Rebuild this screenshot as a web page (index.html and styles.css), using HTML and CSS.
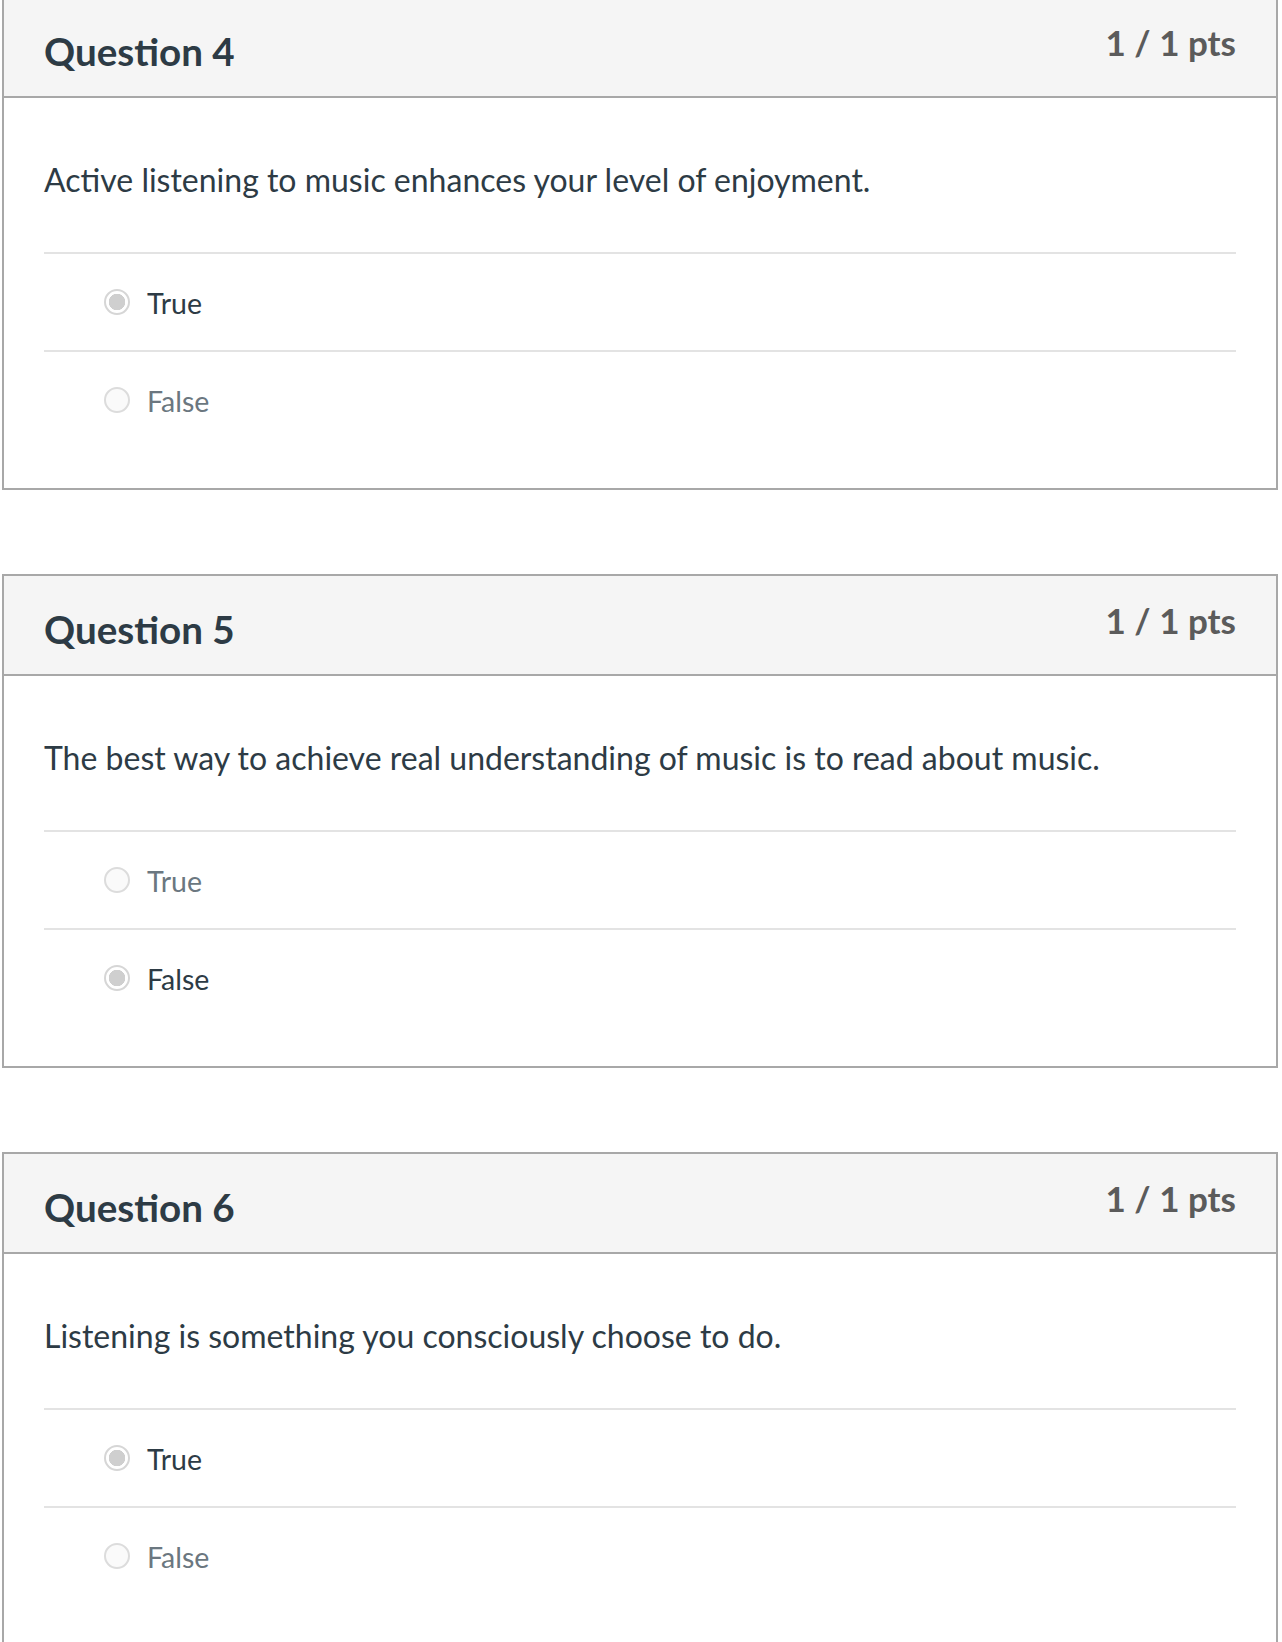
FILE: index.html
```html
<!DOCTYPE html>
<html lang="en">
<head>
<meta charset="utf-8">
<title>Quiz results</title>
<link rel="stylesheet" href="styles.css">
</head>
<body>
<main class="quiz">
  <section class="question">
    <header class="q-header">
      <h2 class="q-title">Question 4</h2>
      <div class="q-pts">1 / 1 pts</div>
    </header>
    <div class="q-body">
      <p class="q-text">Active listening to music enhances your level of enjoyment.</p>
      <div class="answers">
        <div class="answer selected"><span class="radio"></span><span class="label">True</span></div>
        <div class="answer"><span class="radio"></span><span class="label">False</span></div>
      </div>
    </div>
  </section>

  <section class="question">
    <header class="q-header">
      <h2 class="q-title">Question 5</h2>
      <div class="q-pts">1 / 1 pts</div>
    </header>
    <div class="q-body">
      <p class="q-text">The best way to achieve real understanding of music is to read about music.</p>
      <div class="answers">
        <div class="answer"><span class="radio"></span><span class="label">True</span></div>
        <div class="answer selected"><span class="radio"></span><span class="label">False</span></div>
      </div>
    </div>
  </section>

  <section class="question">
    <header class="q-header">
      <h2 class="q-title">Question 6</h2>
      <div class="q-pts">1 / 1 pts</div>
    </header>
    <div class="q-body">
      <p class="q-text">Listening is something you consciously choose to do.</p>
      <div class="answers">
        <div class="answer selected"><span class="radio"></span><span class="label">True</span></div>
        <div class="answer"><span class="radio"></span><span class="label">False</span></div>
      </div>
    </div>
  </section>
</main>
</body>
</html>
```
FILE: styles.css
```css
* { box-sizing: border-box; }
html, body { margin: 0; padding: 0; background: #fff; }
body {
  font-family: Lato, "Noto Sans", sans-serif;
  color: #2d3b45;
}
.quiz {
  display: flex;
  flex-direction: column;
  gap: 84px;
  margin-top: -4px;
  padding-left: 2px;
  width: 1278px;
}
.question {
  border: 2px solid #a8a8a8;
  background: #fff;
}
.q-header {
  height: 100px;
  background: #f5f5f5;
  border-bottom: 2px solid #a8a8a8;
  padding: 0 40px;
  display: flex;
  justify-content: space-between;
  align-items: flex-start;
}
.q-title {
  margin: 34px 0 0;
  font-size: 38.6px;
  line-height: 1;
  font-weight: 700;
  color: #2d3b45;
}
.q-pts {
  margin-top: 27px;
  font-size: 35px;
  line-height: 1;
  font-weight: 700;
  color: #5b5b5b;
}
.q-body {
  padding: 66px 40px 40px;
}
.q-text {
  margin: 0 0 56px;
  font-size: 32px;
  line-height: 1;
}
.answer {
  border-top: 2px solid #e3e3e3;
  height: 98px;
  display: flex;
  align-items: center;
  padding-left: 60px;
  gap: 17px;
}
.radio {
  width: 26px;
  height: 26px;
  border-radius: 50%;
  border: 2px solid #dcdcdc;
  background: #fafafa;
  flex: none;
}
.answer.selected .radio {
  background: #fff radial-gradient(circle, #cfcfcf 0 8px, transparent 8.5px);
  border-color: #d6d6d6;
}
.label {
  font-size: 28.5px;
  line-height: 1;
  padding-top: 2px;
  color: #6b7780;
}
.answer.selected .label {
  color: #2d3b45;
}
```
